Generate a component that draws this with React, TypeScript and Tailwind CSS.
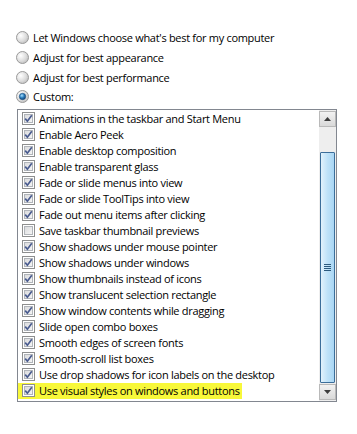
import React from "react";

const radios = [
  { label: "Let Windows choose what's best for my computer", checked: false },
  { label: "Adjust for best appearance", checked: false },
  { label: "Adjust for best performance", checked: false },
  { label: "Custom:", checked: true },
];

const items: { label: string; checked: boolean }[] = [
  { label: "Animations in the taskbar and Start Menu", checked: true },
  { label: "Enable Aero Peek", checked: true },
  { label: "Enable desktop composition", checked: true },
  { label: "Enable transparent glass", checked: true },
  { label: "Fade or slide menus into view", checked: true },
  { label: "Fade or slide ToolTips into view", checked: true },
  { label: "Fade out menu items after clicking", checked: true },
  { label: "Save taskbar thumbnail previews", checked: false },
  { label: "Show shadows under mouse pointer", checked: true },
  { label: "Show shadows under windows", checked: true },
  { label: "Show thumbnails instead of icons", checked: true },
  { label: "Show translucent selection rectangle", checked: true },
  { label: "Show window contents while dragging", checked: true },
  { label: "Slide open combo boxes", checked: true },
  { label: "Smooth edges of screen fonts", checked: true },
  { label: "Smooth-scroll list boxes", checked: true },
  { label: "Use drop shadows for icon labels on the desktop", checked: true },
  { label: "Use visual styles on windows and buttons", checked: true },
];

function Radio({ checked, id }: { checked: boolean; id: string }) {
  return (
    <svg width="13" height="13" viewBox="0 0 13 13" className="shrink-0">
      <defs>
        <radialGradient id={`rg-${id}`} cx="0.35" cy="0.35" r="0.75">
          <stop offset="0" stopColor="#ffffff" />
          <stop offset="0.6" stopColor="#dcdcdc" />
          <stop offset="1" stopColor="#b9b9b9" />
        </radialGradient>
        <radialGradient id={`rb-${id}`} cx="0.4" cy="0.35" r="0.7">
          <stop offset="0" stopColor="#a8e0ff" />
          <stop offset="0.5" stopColor="#2a7dbd" />
          <stop offset="1" stopColor="#0d3a6a" />
        </radialGradient>
      </defs>
      <circle cx="6.5" cy="6.5" r="6" fill={`url(#rg-${id})`} stroke="#9a9a9a" strokeWidth="1" />
      {checked && <circle cx="6.5" cy="6.5" r="3.2" fill={`url(#rb-${id})`} stroke="#1c4d7e" strokeWidth="0.6" />}
    </svg>
  );
}

function Check({ checked }: { checked: boolean }) {
  return (
    <svg width="13" height="13" viewBox="0 0 13 13" className="shrink-0">
      <defs>
        <linearGradient id="cbg" x1="0" y1="0" x2="1" y2="1">
          <stop offset="0" stopColor="#d9dadc" />
          <stop offset="1" stopColor="#f6f6f6" />
        </linearGradient>
      </defs>
      <rect x="0.5" y="0.5" width="12" height="12" fill="#ffffff" stroke="#8e8f8f" />
      <rect x="2.5" y="2.5" width="8" height="8" fill="url(#cbg)" stroke="#b1b5ba" />
      {checked && (
        <path d="M3.2 6.6 L5.4 9.2 L9.8 3.2" fill="none" stroke="#4a5c8f" strokeWidth="1.7" />
      )}
    </svg>
  );
}

export default function App() {
  return (
    <div
      className="w-[357px] h-[434px] bg-white text-black text-[11px] tracking-[-0.3px] overflow-hidden"
      style={{ fontFamily: "'Open Sans', 'Noto Sans', sans-serif" }}
    >
      <div className="pt-[28px] pl-[16px] flex flex-col">
        {radios.map((r, i) => (
          <div key={i} className="h-[19.7px] flex items-center gap-[4px]">
            <Radio checked={r.checked} id={String(i)} />
            <span className="leading-none">{r.label}</span>
          </div>
        ))}
      </div>
      <div className="ml-[17px] mt-[2px] w-[320px] h-[293px] border border-[#828790] flex">
        <div className="flex-1 flex flex-col pt-[1px]">
          {items.map((it, i) => {
            const last = i === items.length - 1;
            return (
              <div key={i} className="h-[16px] flex items-center">
                <div
                  className={`h-[16px] flex items-center gap-[4px] pl-[4px] pr-[2px] ${last ? "bg-[#f8f83a]" : ""}`}
                >
                  <Check checked={it.checked} />
                  <span className="leading-none whitespace-nowrap">{it.label}</span>
                </div>
              </div>
            );
          })}
        </div>
        <div className="w-[17px] flex flex-col bg-[#eeeeee] pt-[1px] pb-[1px]">
          <div className="h-[16px] border border-[#b9b9b9] bg-gradient-to-b from-[#f2f2f2] to-[#d9d9d9] flex items-center justify-center">
            <svg width="7" height="4" viewBox="0 0 7 4">
              <path d="M0 4 L3.5 0 L7 4 Z" fill="#3c3c3c" />
            </svg>
          </div>
          <div className="h-[25px]" />
          <div className="flex-1 mx-[1px] border border-[#3c6e9a] rounded-[1px] bg-gradient-to-r from-[#e2f2fc] via-[#bfe2f8] to-[#a9d6f4] flex items-center justify-center">
            <div className="flex flex-col gap-[1px]">
              <div className="w-[7px] h-[1px] bg-[#2c5a7e]" />
              <div className="w-[7px] h-[1px] bg-[#2c5a7e]" />
              <div className="w-[7px] h-[1px] bg-[#2c5a7e]" />
              <div className="w-[7px] h-[1px] bg-[#2c5a7e]" />
            </div>
          </div>
          <div className="h-[16px] mt-[1px] border border-[#b9b9b9] bg-gradient-to-b from-[#f2f2f2] to-[#d9d9d9] flex items-center justify-center">
            <svg width="7" height="4" viewBox="0 0 7 4">
              <path d="M0 0 L7 0 L3.5 4 Z" fill="#3c3c3c" />
            </svg>
          </div>
        </div>
      </div>
    </div>
  );
}
